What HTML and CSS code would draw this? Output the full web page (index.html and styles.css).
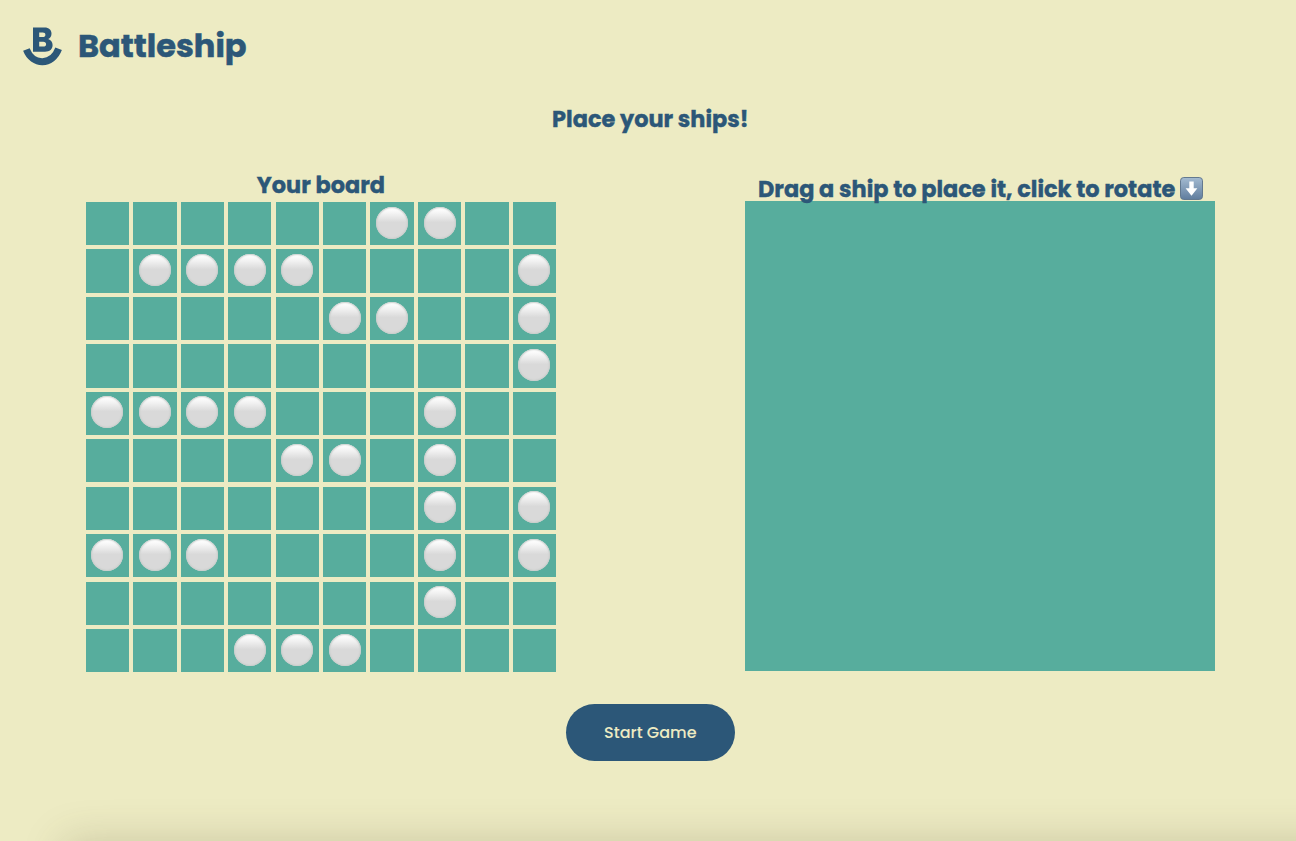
FILE: index.html
```
<!DOCTYPE html>
<html lang="en">
<head>
<meta charset="utf-8">
<title>Battleship</title>
<link rel="stylesheet" href="styles.css">
</head>
<body>
<header class="header">
  <svg class="logo" viewBox="0 0 39 39" aria-hidden="true">
    <path fill="currentColor" fill-rule="evenodd" d="M10 .5H21.5C26 .5 28.5 3 28.5 6.7C28.5 9.3 27.2 11.2 25.2 12.1C27.9 13 29.6 15.2 29.6 18C29.6 22.3 26.6 24.7 22 24.7H10ZM16.2 5.5V10H19.7C21.5 10 22.4 9.2 22.4 7.7C22.4 6.3 21.5 5.5 19.7 5.5ZM16.2 14.8V19.6H20.2C22.1 19.6 23.1 18.8 23.1 17.2C23.1 15.7 22.1 14.8 20.2 14.8Z"/>
    <path fill="none" stroke="currentColor" stroke-width="7" d="M3.4 22.6C9.5 38.8 29.3 38.8 35.6 21.8"/>
  </svg>
  <h1 class="title">Battleship</h1>
</header>
<main class="main">
  <h2 class="heading status">Place your ships!</h2>
  <div class="boards">
    <section class="player">
      <h2 class="heading player-heading">Your board</h2>
      <div class="board" id="board"></div>
    </section>
    <section class="player">
      <h2 class="heading dock-heading"><span>Drag a ship to place it, click to rotate</span>
        <svg class="arrow" viewBox="0 0 23 23" aria-hidden="true">
          <defs><linearGradient id="key" x2="0" y2="1"><stop offset="0" stop-color="#a4bbd1"/><stop offset="1" stop-color="#607d9e"/></linearGradient></defs>
          <rect x=".5" y=".5" width="22" height="22" rx="3.3" fill="url(#key)" stroke="#63798f"/>
          <path fill="#fff" d="M9.3 4.5H13.7V11.2H17.4L11.5 18.8L5.6 11.2H9.3Z"/>
        </svg>
      </h2>
      <div class="dock"></div>
    </section>
  </div>
  <button class="start" type="button"><span>Start Game</span></button>
</main>
<div class="edge"><div class="drawer"></div></div>
<script src="board.js"></script>
</body>
</html>
```
FILE: styles.css
```
* { box-sizing: border-box; }
html { height: 100%; }
body {
  position: relative;
  height: 100%;
  margin: 0;
  background: #edebc3;
  color: #2c5778;
  font-family: Poppins, Inter, "Open Sans", sans-serif;
}
.header {
  display: flex;
  align-items: center;
  gap: 16px;
  height: 92px;
  padding-left: 23px;
}
.logo { width: 39px; height: 39px; }
.title {
  margin: 0;
  font-size: 32px;
  line-height: 48px;
  font-weight: 700;
  -webkit-text-stroke: 0.5px currentColor;
}
.heading {
  margin: 0;
  font-size: 22.4px;
  line-height: 34px;
  font-weight: 700;
  text-align: center;
  white-space: nowrap;
  -webkit-text-stroke: 0.4px currentColor;
}
.main {
  display: flex;
  flex-direction: column;
  align-items: center;
  padding-left: 4.6px;
}
.status { margin-top: 10px; }
.boards {
  display: flex;
  gap: 188.6px;
  margin-top: 31px;
}
.player { width: 470.2px; }
.player-heading { height: 35px; padding-top: 1px; }
.dock-heading {
  display: flex;
  align-items: center;
  justify-content: center;
  gap: 5px;
  height: 34px;
  padding: 10px 0 0 2px;
}
.arrow { width: 23px; height: 23px; margin-top: -2px; }
.board {
  display: grid;
  grid-template: repeat(10, 1fr) / repeat(10, 1fr);
  gap: 4.2px;
  height: 470.2px;
}
.cell {
  display: flex;
  align-items: center;
  justify-content: center;
  background: #57ad9d;
}
.peg {
  width: 32px;
  height: 32px;
  margin-top: -2px;
  border-radius: 50%;
  background: linear-gradient(#fff 5%, #f3f3f3 20%, #d9d9d9 48%);
  box-shadow: inset 0 0 1.5px 1px #c9cdcb;
}
.dock {
  position: relative;
  z-index: -1;
  height: 470px;
  background: #57ad9d;
}
.start {
  width: 169px;
  height: 57px;
  margin-top: 32px;
  padding: 0;
  border: 0;
  border-radius: 29px;
  background: #2c5778;
  color: #edebc3;
  font: 500 16px/24px Poppins, Inter, sans-serif;
}
.edge {
  position: absolute;
  inset: auto 0 0;
  height: 60px;
  overflow: hidden;
  pointer-events: none;
}
.drawer {
  height: 100px;
  margin: 60px -64px 0 64px;
  box-shadow: 0 0 42px rgba(80, 75, 40, 0.22);
}
```
FILE: board.js
```
const ships = [
  "......##..",
  ".####....#",
  ".....##..#",
  ".........#",
  "####...#..",
  "....##.#..",
  ".......#.#",
  "###....#.#",
  ".......#..",
  "...###....",
];
const board = document.getElementById("board");
for (const square of ships.join("")) {
  const cell = document.createElement("div");
  cell.className = "cell";
  if (square === "#") {
    const peg = document.createElement("div");
    peg.className = "peg";
    cell.append(peg);
  }
  board.append(cell);
}
```
